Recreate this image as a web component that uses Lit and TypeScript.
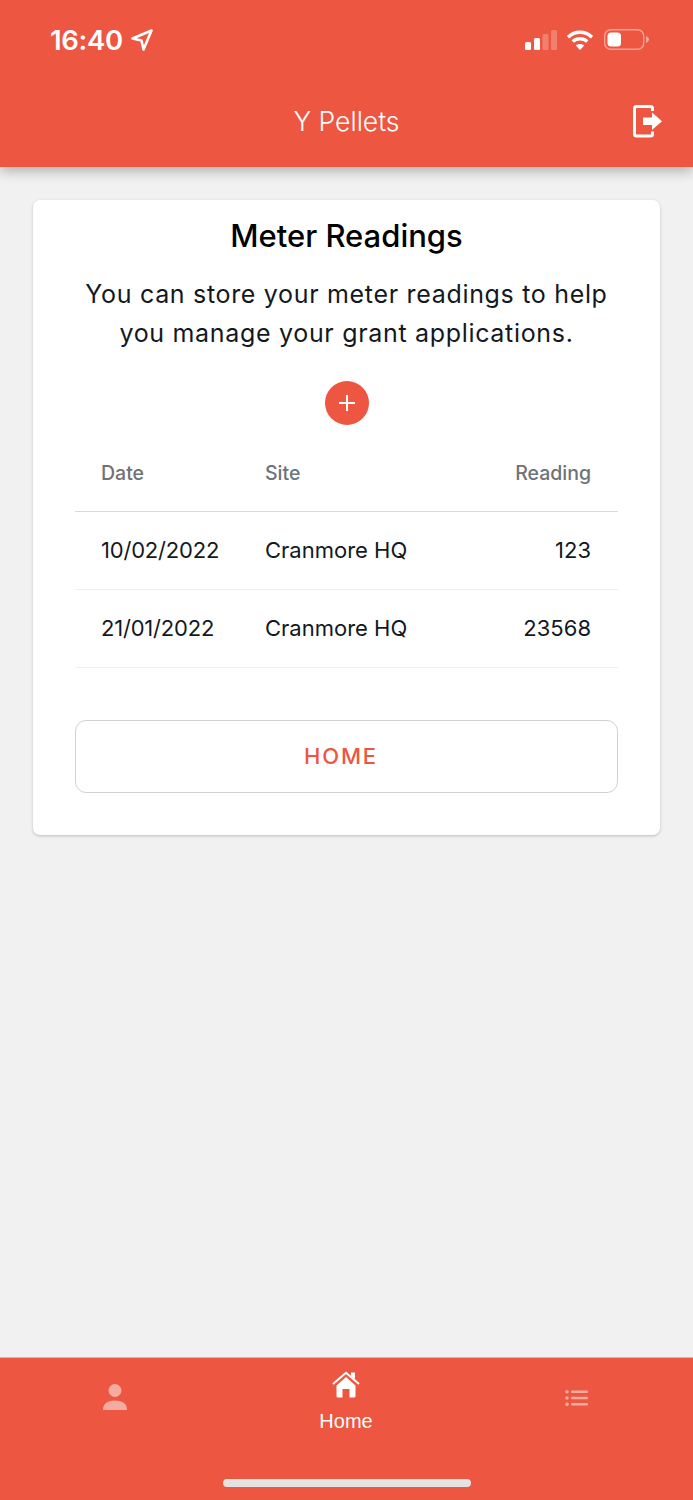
// app.ts
import { LitElement, html, css } from 'lit';
import { customElement } from 'lit/decorators.js';

const readings = [
  { date: '10/02/2022', site: 'Cranmore HQ', reading: '123' },
  { date: '21/01/2022', site: 'Cranmore HQ', reading: '23568' },
];

@customElement('app-root')
export class AppRoot extends LitElement {
  static override styles = css`
    :host {
      display: block;
      font-family: Inter, 'Liberation Sans', sans-serif;
    }
    .page {
      display: flex;
      flex-direction: column;
      height: 1500px;
      background: #f1f1f1;
      overflow: hidden;
    }
    .header {
      height: 167px;
      flex: none;
      background: #ed5641;
      color: #fff;
      box-shadow: 0 4px 12px rgba(0, 0, 0, 0.28);
      display: flex;
      flex-direction: column;
      position: relative;
    }
    .status {
      height: 79px;
      display: flex;
      align-items: center;
      justify-content: space-between;
      padding: 0 44px 0 50px;
    }
    .time {
      display: flex;
      align-items: center;
      gap: 7px;
      font-size: 27.5px;
      font-weight: 600;
      letter-spacing: -0.3px;
    }
    .status-icons {
      display: flex;
      align-items: center;
      gap: 9px;
    }
    .status-icons svg:last-child {
      margin-left: 1px;
    }
    .title-bar {
      height: 88px;
      display: flex;
      align-items: center;
      justify-content: center;
      position: relative;
      font-size: 26.5px;
      font-weight: 300;
      padding-bottom: 4px;
      box-sizing: border-box;
    }
    .logout {
      position: absolute;
      right: 31px;
      top: 26px;
      display: block;
    }
    .main {
      flex: 1;
      padding: 33px 33px 0;
    }
    .card {
      background: #fff;
      border-radius: 7px;
      box-shadow: 0 1px 3px rgba(0, 0, 0, 0.22);
      height: 635px;
      box-sizing: border-box;
      padding: 17px 42px 0;
    }
    h1 {
      margin: 0;
      font-size: 31px;
      line-height: 38px;
      font-weight: 500;
      color: #000;
      text-align: center;
    }
    .intro {
      margin: 20px 0 0;
      font-size: 25px;
      line-height: 39px;
      letter-spacing: 0.68px;
      color: #14181f;
      text-align: center;
    }
    .add-wrap {
      display: flex;
      justify-content: center;
      margin-top: 28px;
    }
    .add {
      width: 44px;
      height: 44px;
      border-radius: 50%;
      background: #ed5641;
      display: flex;
      align-items: center;
      justify-content: center;
    }
    .row {
      display: grid;
      grid-template-columns: 164px 1fr auto;
      align-items: center;
      padding: 0 27px 2px 26px;
      height: 78px;
      box-sizing: border-box;
      border-bottom: 1px solid #efefef;
      font-size: 22px;
      color: #14181f;
    }
    .row .date {
      letter-spacing: -0.2px;
    }
    .row.head {
      height: 87px;
      border-bottom-color: #d9d9d9;
      font-size: 19.5px;
      font-weight: 500;
      color: #6f7277;
      padding-top: 9px;
      padding-bottom: 0;
    }
    .row span:last-child {
      text-align: right;
    }
    .home-btn {
      display: block;
      width: 100%;
      height: 73px;
      margin-top: 52px;
      padding: 0 11px 2px 0;
      background: #fff;
      border: 1.5px solid #d2d2d2;
      border-radius: 11px;
      color: #ed5641;
      font-family: inherit;
      font-size: 22px;
      font-weight: 500;
      letter-spacing: 1.8px;
    }
    .tabs {
      height: 143px;
      flex: none;
      background: #ed5641;
      border-top: 1px solid #e5b0a8;
      box-sizing: border-box;
      display: grid;
      grid-template-columns: 230px 232px 229px;
      position: relative;
      color: #fff;
    }
    .tab {
      display: flex;
      flex-direction: column;
      align-items: center;
      padding-top: 13px;
    }
    .tab.dim svg {
      opacity: 0.5;
    }
    .tab.dim {
      padding-top: 26px;
    }
    .tab span {
      font-family: 'Liberation Sans', Arial, sans-serif;
      font-size: 20px;
      line-height: 24px;
      margin-top: 11px;
    }
    .list {
      margin-top: 6px;
    }
    .home-indicator {
      position: absolute;
      left: 223px;
      bottom: 13px;
      width: 248px;
      height: 8px;
      border-radius: 4px;
      background: #e3e3e3;
    }
    svg {
      display: block;
    }
  `;

  override render() {
    return html`
      <div class="page">
        <div class="header">
          <div class="status">
            <div class="time">
              16:40
              <svg width="24" height="24" viewBox="0 0 24 24" fill="none" stroke="#fff" stroke-width="2.6" stroke-linejoin="round">
                <path d="M2.5 10.5 L21.5 2.5 L13.5 21.5 L11.5 12.5 Z" />
              </svg>
            </div>
            <div class="status-icons">
              <svg width="32" height="20" viewBox="0 0 32 20" fill="#fff">
                <rect x="0" y="12" width="6" height="8" rx="1.5" />
                <rect x="9" y="8" width="6" height="12" rx="1.5" />
                <rect x="17.500" y="4" width="6" height="16" rx="1.5" opacity=".25" />
                <rect x="26" y="0" width="6" height="20" rx="1.5" opacity=".25" />
              </svg>
              <svg width="28" height="21" viewBox="0 0 28 21" fill="none" stroke="#fff" stroke-width="3.4">
                <path d="M2 8.2 C9 1.6 19 1.6 26 8.2" />
                <path d="M6.7 12.6 C11 8.8 17 8.8 21.3 12.6" />
                <path d="M14 21 L9.8 16.500 C12 14.500 16 14.500 18.2 16.500 Z" fill="#fff" stroke="none" />
              </svg>
              <svg width="45" height="21" viewBox="0 0 45 21" fill="none">
                <rect x="0.7" y="0.7" width="39" height="19.6" rx="6" stroke="#fff" stroke-opacity=".45" stroke-width="1.4" />
                <rect x="3.5" y="3.5" width="13.5" height="14" rx="3.5" fill="#fff" />
                <path d="M42 7 C44 7.700 45 9 45 10.500 C45 12 44 13.300 42 14 Z" fill="#fff" fill-opacity=".45" />
              </svg>
            </div>
          </div>
          <div class="title-bar">
            Y Pellets
            <svg class="logout" width="29" height="33" viewBox="0 0 29 33" fill="none">
              <path d="M19.500 6 V3.500 Q19.500 1.500 17.500 1.500 H3.500 Q1.500 1.500 1.500 3.500 V29 Q1.500 31 3.500 31 H17.500 Q19.500 31 19.500 29 V26.500" stroke="#fff" stroke-width="3" />
              <path d="M10 12.500 H19 V7.500 L29 16.200 L19 25 V20 H10 Z" fill="#fff" />
            </svg>
          </div>
        </div>

        <div class="main">
          <div class="card">
            <h1>Meter Readings</h1>
            <p class="intro">You can store your meter readings to help<br />you manage your grant applications.</p>
            <div class="add-wrap">
              <div class="add">
                <svg width="20" height="20" viewBox="0 0 20 20" stroke="#fff" stroke-width="2"><path d="M10 2 V18 M2 10 H18" /></svg>
              </div>
            </div>
            <div class="row head"><span>Date</span><span>Site</span><span>Reading</span></div>
            ${readings.map(
              (r) => html`<div class="row"><span class="date">${r.date}</span><span>${r.site}</span><span>${r.reading}</span></div>`,
            )}
            <button class="home-btn">HOME</button>
          </div>
        </div>

        <div class="tabs">
          <div class="tab dim">
            <svg width="26" height="26" viewBox="0 0 26 26" fill="#fff">
              <circle cx="13" cy="6.500" r="6.500" />
              <path d="M1 25.500 C1 19.500 6 16.500 13 16.500 C20 16.500 25 19.500 25 25.500 Q25 26 24 26 H2 Q1 26 1 25.500 Z" />
            </svg>
          </div>
          <div class="tab">
            <svg width="28" height="27" viewBox="0 0 28 27" fill="#fff">
              <path d="M1 13 L14 1.800 L27 13" fill="none" stroke="#fff" stroke-width="2" />
              <path d="M19 1.500 H23 V8 L19 5 Z" />
              <path d="M4.500 14.500 L14 6 L23.500 14.500 V25 Q23.500 26.500 22 26.500 H17.500 V18 H10.500 V26.500 H6 Q4.500 26.500 4.500 25 Z" />
            </svg>
            <span>Home</span>
          </div>
          <div class="tab dim">
            <svg class="list" width="24" height="16" viewBox="0 0 24 16" fill="#fff">
              <circle cx="2" cy="1.800" r="1.800" /><circle cx="2" cy="8" r="1.800" /><circle cx="2" cy="14.300" r="1.800" />
              <rect x="6" y="0.500" width="17" height="2.600" rx="1" />
              <rect x="6" y="6.700" width="17" height="2.600" rx="1" />
              <rect x="6" y="12.900" width="17" height="2.600" rx="1" />
            </svg>
          </div>
          <div class="home-indicator"></div>
        </div>
      </div>
    `;
  }
}
